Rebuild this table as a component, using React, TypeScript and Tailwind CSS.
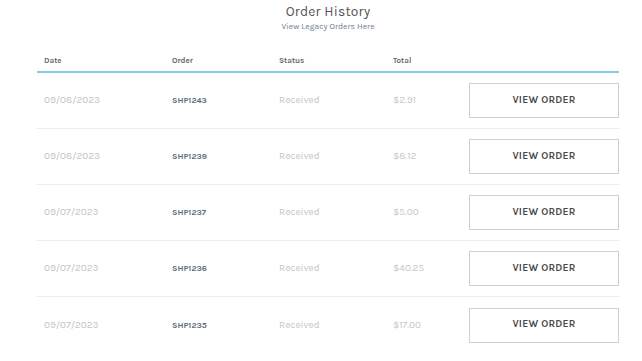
import React from 'react';

const orders = [
  { date: '09/08/2023', id: 'SHP1243', status: 'Received', total: '$2.91' },
  { date: '09/08/2023', id: 'SHP1239', status: 'Received', total: '$8.12' },
  { date: '09/07/2023', id: 'SHP1237', status: 'Received', total: '$5.00' },
  { date: '09/07/2023', id: 'SHP1236', status: 'Received', total: '$40.25' },
  { date: '09/07/2023', id: 'SHP1235', status: 'Received', total: '$17.00' },
];

const cols = 'grid grid-cols-[128px_107px_114px_1fr_150px] items-center pl-[7px]';

export default function App() {
  return (
    <div className="min-h-screen bg-white font-['Karla','Inter','Liberation_Sans',sans-serif]">
      <div className="mx-[37px] w-[582px]">
        {/* Heading */}
        <div className="flex flex-col items-center pt-[2px]">
          <h1 className="text-[13.8px] leading-[18px] text-[#555] tracking-[0.2px]">Order History</h1>
          <a className="text-[8.5px] leading-[12px] text-[#6d8191]">View Legacy Orders Here</a>
        </div>

        {/* Table */}
        <div className="mt-[19px]">
          <div className={`${cols} h-[22px] border-b-2 border-[#7ecfdb] text-[8px] font-bold text-[#666]`}>
            <div>Date</div>
            <div>Order</div>
            <div>Status</div>
            <div>Total</div>
            <div />
          </div>
          {orders.map((o, i) => (
            <div
              key={o.id}
              className={`${cols} h-[56px] ${i < orders.length - 1 ? 'border-b border-[#ececec]' : ''}`}
            >
              <div className="text-[10px] text-[#c4c4c4]">{o.date}</div>
              <div className="text-[8.5px] font-bold text-[#5b6a78]">{o.id}</div>
              <div className="text-[10px] text-[#c8c8c8]">{o.status}</div>
              <div className="text-[10px] text-[#c8c8c8]">{o.total}</div>
              <button className="h-[35px] w-[150px] border border-[#cfcfcf] bg-white text-[10.3px] font-bold tracking-[0.2px] text-[#4a4a4a]">
                VIEW ORDER
              </button>
            </div>
          ))}
        </div>
      </div>
    </div>
  );
}
